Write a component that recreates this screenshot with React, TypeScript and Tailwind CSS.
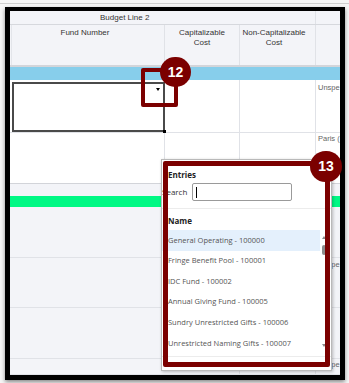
import React from "react";

const entries = [
  "General Operating - 100000",
  "Fringe Benefit Pool - 100001",
  "IDC Fund - 100002",
  "Annual Giving Fund - 100005",
  "Sundry Unrestricted Gifts - 100006",
  "Unrestricted Naming Gifts - 100007",
];

// one row of the grid: fund | capitalizable | non-cap | side column
function Row({ h, bg, first, side, sideTop, border = "border-[#e0e2e7]" }: any) {
  return (
    <div className={`flex ${h} ${bg} border-b ${border}`}>
      <div className="w-[155px] shrink-0 h-full">{first}</div>
      <div className="w-[75px] shrink-0 border-r border-[#e0e2e7]" />
      <div className="w-[76px] shrink-0 border-r border-[#e0e2e7]" />
      <div className={`flex-1 whitespace-nowrap pl-[2px] text-[7.5px] leading-[9px] text-[#666] ${sideTop}`}>
        {side}
      </div>
    </div>
  );
}

function Marker({ n, className }: { n: string; className: string }) {
  return (
    <div
      className={`absolute flex items-center justify-center rounded-full bg-[#7b0000] text-white text-[14px] font-bold ${className}`}
      style={{ fontFamily: "'Liberation Sans', Arial, sans-serif" }}
    >
      {n}
    </div>
  );
}

export default function App() {
  return (
    <div
      className="relative w-[349px] h-[383px] overflow-hidden bg-[#f6f6f6]"
      style={{ fontFamily: "'Liberation Sans', Arial, sans-serif" }}
    >
      <div className="h-[3px]" />
      <div className="h-px bg-[#cfcfcf]" />
      <div className="h-[3px]" />

      {/* framed screenshot */}
      <div className="ml-[5px] w-[340px] h-[373px] border-x-[5px] border-b-[5px] border-t-4 border-black bg-white shadow-[0_2px_4px_rgba(0,0,0,0.45)] overflow-hidden">
        {/* Budget line header */}
        <div className="flex h-[14px] bg-[#f3f4f8] border-b border-[#d6d8dd]">
          <div className="w-[306px] border-r border-[#e0e2e7] pl-[90px] text-[8px] leading-[13px] text-[#333]">
            Budget Line 2
          </div>
          <div className="flex-1" />
        </div>

        {/* column header */}
        <div className="flex h-[42px] bg-[#f3f4f8] border-b-2 border-[#d3d5da]">
          <div className="w-[155px] flex">
            <div className="w-[2px] border-r border-[#e3e5ea]" />
            <div className="flex-1 border-r border-[#e0e2e7] pt-[3px] pr-[6px] text-center text-[8px] leading-[10px] text-[#333]">
              Fund Number
            </div>
          </div>
          <div className="w-[75px] border-r border-[#e0e2e7] pt-[3px] text-center text-[8px] leading-[10px] text-[#333]">
            Capitalizable
            <br />
            Cost
          </div>
          <div className="w-[76px] border-r border-[#e0e2e7] pt-[3px] pr-[7px] text-center text-[8px] leading-[10px] text-[#333]">
            Non-Capitalizable
            <br />
            Cost
          </div>
          <div className="flex-1" />
        </div>

        {/* blue band */}
        <div className="h-[13px] bg-[#87ceeb]" />

        <Row
          h="h-[53px]"
          bg="bg-white"
          sideTop="pt-[3px]"
          side="Unspe"
          first={
            <div className="h-full pl-[2px] pt-[2px]">
              <div className="relative h-full border-2 border-[#4a4a4a] bg-white">
                <div className="absolute right-[3px] top-[4px] w-0 h-0 border-x-[2.5px] border-x-transparent border-t-[3px] border-t-black" />
                <div className="absolute -right-[3px] -bottom-[3px] w-[3px] h-[3px] bg-black" />
              </div>
            </div>
          }
        />
        <Row
          h="h-[51px]"
          bg="bg-white"
          border="border-[#d2d4d9]"
          sideTop="pt-[1px]"
          side="Paris ("
          first={<div className="h-full border-r border-[#e0e2e7]" />}
        />

        <div className="h-[12px] bg-[#f3f4f8]" />
        <div className="h-[11px] bg-[#00f884]" />

        <Row h="h-[51px]" bg="bg-[#f3f4f8]" sideTop="pt-[2px]" side="" first={null} />
        <Row h="h-[50px]" bg="bg-[#f3f4f8]" sideTop="pt-[2px]" side="Unspe" first={null} />
        <Row h="h-[51px]" bg="bg-[#f3f4f8]" sideTop="pt-[2px]" side="" first={null} />
        <Row h="h-[16px]" bg="bg-[#f3f4f8]" sideTop="pt-[1px]" side="Unspe" first={null} />
      </div>

      {/* dropdown popup */}
      <div
        className="absolute left-[161px] top-[159px] w-[171px] h-[212px] bg-white border border-[#b9b9b9] shadow-[1px_1px_3px_rgba(0,0,0,0.25)]"
        style={{ fontFamily: "'Open Sans', 'Noto Sans', sans-serif" }}
      >
        <div className="pl-[6px] pt-[10px] text-[8px] leading-[10px] font-bold text-[#222]">Entries</div>
        <div className="mt-[3px] flex items-center h-[18px]">
          <div className="w-[30px] text-[8px] text-[#333]">Search</div>
          <div className="relative w-[100px] h-[18px] border border-[#9a9a9a] rounded-[2px] bg-white">
            <div className="absolute left-[3px] top-[3px] w-px h-[11px] bg-black" />
          </div>
        </div>
        <div className="mt-[7px] border-t border-[#ececec]" />
        <div className="pl-[6px] pt-[7px] text-[8px] leading-[10px] font-bold text-[#222]">Name</div>
        <div className="mt-[4px] w-[158px]">
          {entries.map((e, i) => (
            <div
              key={e}
              className={`h-[20.6px] flex items-center pl-[6px] text-[7.5px] text-[#555] ${i === 0 ? "bg-[#e4f0fc]" : ""}`}
            >
              {e}
            </div>
          ))}
        </div>
        <div className="mt-[2px] border-t border-[#ececec]" />

        {/* scrollbar */}
        <div className="absolute left-[160px] top-[76px] w-0 h-0 border-x-[2px] border-x-transparent border-b-[3px] border-b-[#8a8a8a]" />
        <div className="absolute left-[160px] top-[85px] w-[4px] h-[10px] rounded-[2px] bg-[#8c8c8c]" />
        <div className="absolute left-[160px] top-[184px] w-0 h-0 border-x-[2px] border-x-transparent border-t-[3px] border-t-[#8a8a8a]" />
      </div>

      {/* annotation callouts */}
      <div className="absolute left-[141px] top-[68px] w-[37px] h-[39px] border-4 border-[#7b0000] rounded-[2px]" />
      <Marker n="12" className="left-[160px] top-[57px] w-[31px] h-[30px]" />

      <div className="absolute left-[163px] top-[161px] w-[167px] h-[206px] border-[5px] border-[#7b0000] rounded-[2px]" />
      <Marker n="13" className="left-[310px] top-[151px] w-[32px] h-[31px]" />
    </div>
  );
}
